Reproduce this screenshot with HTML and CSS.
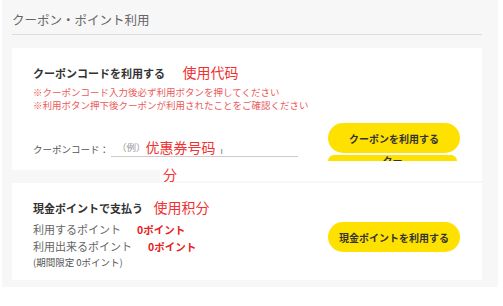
FILE: index.html
```html
<!DOCTYPE html>
<html lang="ja">
<head>
    <meta charset="UTF-8">
    <meta name="viewport" content="width=device-width, initial-scale=1.0">
    <title>クーポン・ポイント利用</title>
    <link rel="stylesheet" href="styles.css">
</head>
<body>
    <div class="wrap">
        <h1 class="title">クーポン・ポイント利用</h1>

        <div class="card coupon-card">
            <div class="card-left">
                <h2 class="card-head">クーポンコードを利用する <span class="note-cn note-wide">使用代码</span></h2>
                <p class="warn">※クーポンコード入力後必ず利用ボタンを押してください</p>
                <p class="warn">※利用ボタン押下後クーポンが利用されたことをご確認ください</p>
                <div class="code-row">
                    <span class="code-label">クーポンコード：</span>
                    <div class="code-input">
                        <span class="placeholder">（例）</span><span class="note-cn">优惠券号码</span><span class="caret">ı</span>
                    </div>
                </div>
            </div>
            <div class="card-right">
                <button class="pill">クーポンを利用する</button>
                <div class="pill-ghost">クー</div>
            </div>
            <div class="smudge"><span class="note-cn">分</span></div>
        </div>

        <div class="card point-card">
            <div class="card-left">
                <h2 class="card-head">現金ポイントで支払う <span class="note-cn">使用积分</span></h2>
                <p class="pt-row">利用するポイント<strong class="pt-val">0ポイント</strong></p>
                <p class="pt-row">利用出来るポイント<strong class="pt-val">0ポイント</strong></p>
                <p class="pt-limit">(期間限定 0ポイント)</p>
            </div>
            <div class="card-right">
                <button class="pill pill-low">現金ポイントを利用する</button>
            </div>
        </div>
    </div>
</body>
</html>
```

FILE: styles.css
```css
body {
    margin: 0;
    padding: 0;
    background-color: #fff;
    font-family: "Noto Sans CJK JP", "Noto Sans", sans-serif;
    color: #333;
}

.wrap {
    margin: 0 5px 0 2px;
    padding: 12px 16px 7px 10px;
    background-color: #f7f7f7;
}

.title {
    margin: 0;
    padding-bottom: 6px;
    font-size: 12.5px;
    line-height: 16px;
    font-weight: normal;
    color: #666;
    border-bottom: 1px solid #dcdcdc;
}

.card {
    position: relative;
    display: flex;
    justify-content: space-between;
    background-color: #fff;
    padding: 17px 22px 0 21px;
}

.coupon-card {
    margin-top: 13px;
    height: 105px;
}

.point-card {
    margin-top: 13px;
    height: 80px;
}

.card-head {
    margin: 0 0 6px;
    font-size: 11px;
    line-height: 14px;
    font-weight: bold;
    color: #333;
}

.note-cn {
    font-family: "Noto Sans CJK SC", sans-serif;
    font-weight: normal;
    font-size: 14px;
    color: #f03232;
    margin-left: 8px;
}

.note-wide {
    margin-left: 15px;
}

.warn {
    margin: 0;
    font-size: 9.5px;
    line-height: 13px;
    color: #ea5a5a;
    white-space: nowrap;
}

.code-row {
    display: flex;
    align-items: flex-end;
    margin-top: 27px;
}

.code-label {
    font-size: 9.5px;
    line-height: 12px;
    color: #555;
    padding-bottom: 2px;
}

.code-input {
    display: flex;
    align-items: flex-end;
    width: 187px;
    margin-left: 2px;
    border-bottom: 1px solid #ccc;
    height: 17px;
}

.code-input .placeholder {
    font-size: 9.5px;
    line-height: 12px;
    color: #999;
    padding: 0 0 3px 6px;
}

.code-input .note-cn {
    margin-left: 0;
    line-height: 17px;
    background-color: #fff;
}

.code-input .caret {
    font-size: 9px;
    line-height: 10px;
    color: #777;
    margin-left: 5px;
}

.card-right {
    display: flex;
    flex-direction: column;
    align-items: flex-start;
    padding-top: 58px;
}

.pill {
    width: 132px;
    height: 30px;
    border: none;
    border-radius: 15px;
    background-color: #ffe100;
    font-family: inherit;
    font-size: 10px;
    font-weight: bold;
    color: #333;
    cursor: pointer;
}

.pill-ghost {
    width: 129px;
    height: 13px;
    margin-top: 2px;
    border-radius: 6px 6px 3px 3px;
    background-color: #ffe100;
    text-align: center;
    font-size: 10px;
    line-height: 11px;
    font-weight: bold;
    color: #333;
}

.smudge {
    position: absolute;
    left: 148px;
    right: 0;
    top: 113px;
    height: 20px;
    background-color: #fff;
}

.smudge .note-cn {
    margin-left: 3px;
    line-height: 16px;
}

.pt-row {
    margin: 0;
    font-size: 11px;
    line-height: 16px;
    color: #666;
}

.pt-val {
    margin-left: 16px;
    font-size: 10.5px;
    color: #e82020;
}

.pt-limit {
    margin: 0;
    font-size: 9.5px;
    line-height: 14px;
    color: #555;
}

.point-card .card-right {
    padding-top: 22px;
}
```
